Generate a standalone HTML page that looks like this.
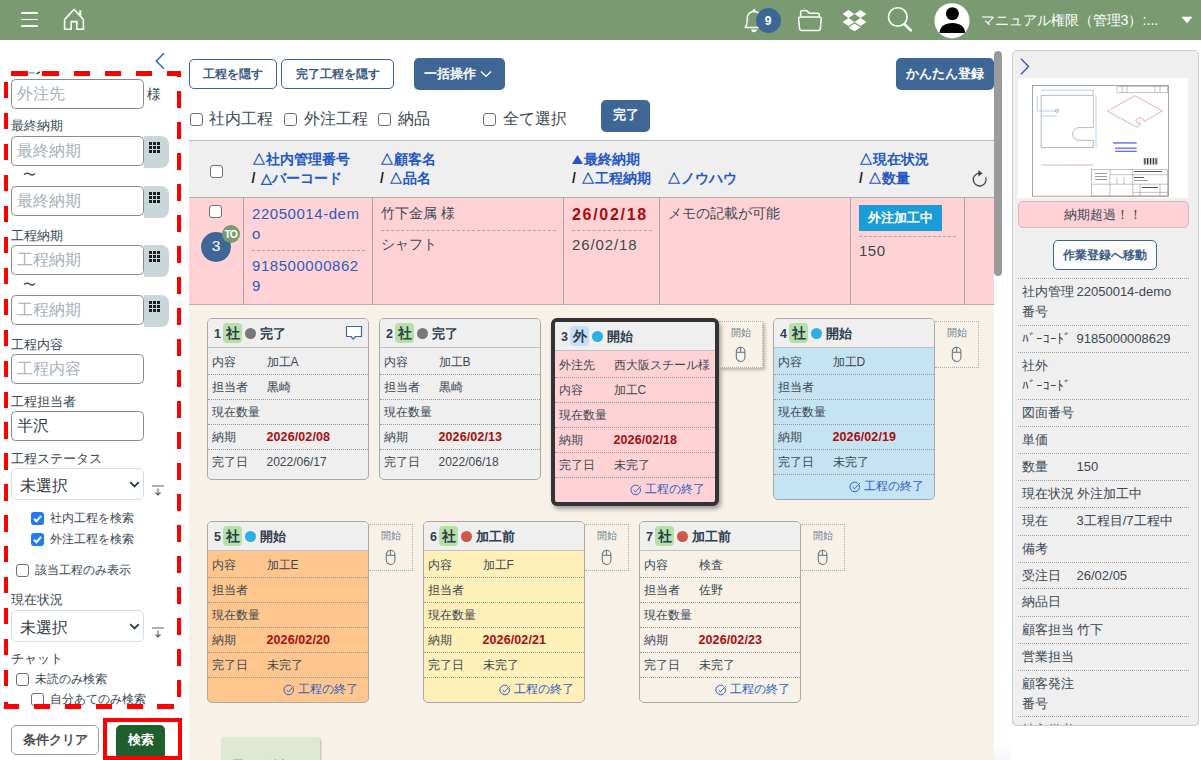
<!DOCTYPE html><html><head><meta charset="utf-8"><title>工程</title><style>
*{box-sizing:border-box;margin:0;padding:0}
html,body{width:1201px;height:760px;overflow:hidden;background:#fff;font-family:"Liberation Sans",sans-serif;color:#333}
.a{position:absolute}
.hdr{left:0;top:0;width:1201px;height:40px;background:#7a9b71}
.lbl{font-size:13px;color:#3b4853;line-height:15px;white-space:nowrap}
.inp{border:1px solid #8a8a8a;border-radius:4.5px;background:#fff;height:30px;width:133px;font-size:16px;color:#b3bcc4;padding-left:5px;line-height:28px;white-space:nowrap}
.cal{background:#c9d7db;border-radius:0 8px 8px 0;width:25px;height:32px}
.grid{left:5px;top:5px;width:11px;height:11px;background:
 linear-gradient(#222,#222) 0 0/3px 3px no-repeat}
.btnw{border:1px solid #3f6391;border-radius:5px;background:#fff;color:#3b5a82;font-weight:bold;font-size:12px;text-align:center;white-space:nowrap}
.btnb{border-radius:5px;background:#3f6796;color:#fff;font-weight:bold;font-size:12px;text-align:center;white-space:nowrap}
.cb{width:13px;height:13px;border:1px solid #6f6f6f;border-radius:3px;background:#fff}
.cbc{width:13px;height:13px;border-radius:3px;background:#1f7bf2}
.tl{font-size:16px;color:#3b4853;white-space:nowrap;line-height:18px}
.card{position:absolute;border:1px solid #a9a9a9;border-radius:5px;overflow:hidden;width:162px}
.card .hd{height:29px;background:#efefef;border-bottom:1px solid #c2c2c2;position:relative;white-space:nowrap}
.card .r{height:25px;border-bottom:1px dotted #9a9a9a;position:relative;font-size:12px;color:#3b4853;white-space:nowrap}
.card .r.f{height:27px}
.card .r.f span{top:6.5px}
.card .r span{position:absolute;top:5px;line-height:14px}
.card .r .k{left:4.3px}
.card .r .v{left:58.5px}
.card .r .red{color:#a50e0e;font-weight:bold;font-size:12.5px;letter-spacing:0.1px}
.card .lk{height:24px;position:relative;font-size:12.3px;color:#2f5fc0;white-space:nowrap}
.num{position:absolute;left:6px;top:7.5px;font-size:12.5px;font-weight:bold;color:#2d3e4e;line-height:14px}
.bg{position:absolute;left:15px;top:4px;width:19px;height:20px;border-radius:4px;background:#b6e0a6;font-size:14px;font-weight:bold;color:#2d3e4e;text-align:center;line-height:20px}
.dot{position:absolute;left:37px;top:8.5px;width:11px;height:11px;border-radius:50%}
.st{position:absolute;left:51.5px;top:6.5px;font-size:13px;font-weight:bold;color:#2d3e4e;line-height:16px}
.sbox{position:absolute;width:44px;height:47px;border:1px dotted #b0b0b0;border-left:none}
.sbox .t{position:absolute;left:0;width:43px;top:5px;text-align:center;font-size:10.2px;color:#6b7d8c;line-height:12px}
.dl{position:absolute;height:0;border-top:1px dashed #aaa}
.th{font-size:14px;font-weight:bold;color:#2457c5;white-space:nowrap;line-height:19px}
.th i{font-style:normal;color:#222}
.rp .row{position:absolute;left:1017px;width:171px;border-bottom:1px dotted #a0a0a0}
.rp .k,.rp .v{position:absolute;font-size:13px;color:#3b4853;line-height:20px;white-space:nowrap}
</style></head><body>
<div class="a hdr"></div>
<div class="a" style="left:20.5px;top:12.3px;width:17px;height:1.5px;background:#fff;border-radius:1px"></div>
<div class="a" style="left:20.5px;top:18.7px;width:17px;height:1.5px;background:#fff;border-radius:1px"></div>
<div class="a" style="left:20.5px;top:25.1px;width:17px;height:1.5px;background:#fff;border-radius:1px"></div>
<svg class="a" style="left:60px;top:6px" width="30" height="28" viewBox="0 0 30 28">
<path d="M4.6 13.5 L14 3.5 L23.4 13.5 L23.4 23.3 L16.8 23.3 L16.8 15.6 L11.2 15.6 L11.2 23.3 L4.6 23.3 Z" fill="none" stroke="#fff" stroke-width="1.6" stroke-linejoin="miter"/>
<rect x="19.3" y="4.2" width="2" height="5.6" fill="#fff"/></svg>
<svg class="a" style="left:742px;top:6px" width="24" height="28" viewBox="0 0 24 28">
<path d="M3 21.5 C5 19.5 5.2 17 5.2 13 C5.2 8.5 7.8 5.5 12 5.5 C16.2 5.5 18.8 8.5 18.8 13 C18.8 17 19 19.5 21 21.5 Z" fill="none" stroke="#fff" stroke-width="1.4" stroke-linejoin="round"/>
<circle cx="12" cy="4.4" r="1.4" fill="#fff"/>
<path d="M9.3 23.5 a2.7 2.7 0 0 0 5.4 0 Z" fill="#fff"/></svg>
<div class="a" style="left:755.5px;top:7.8px;width:25px;height:25px;border-radius:50%;background:#3f6796;color:#fff;font-weight:bold;font-size:12px;text-align:center;line-height:26.5px">9</div>
<svg class="a" style="left:796px;top:8px" width="28" height="26" viewBox="0 0 28 26">
<path d="M4.6 8.5 L4.6 4.6 Q4.6 2.6 6.6 2.6 L9.5 2.6 Q10.5 2.6 11.3 3.3 L13.2 5.2 L21.6 5.2 Q23.3 5.2 23.3 6.9 L23.3 8.5" fill="none" stroke="#fff" stroke-width="1.5" stroke-linejoin="round"/>
<path d="M2.6 11 Q2.6 9 4.6 9 L23.4 9 Q25.4 9 25.2 11 L24.4 20.5 Q24.2 22.5 22.2 22.5 L5.8 22.5 Q3.8 22.5 3.6 20.5 Z" fill="none" stroke="#fff" stroke-width="1.5" stroke-linejoin="round"/></svg>
<svg class="a" style="left:841.3px;top:9px" width="27" height="23" viewBox="0 0 27 23">
<path d="M7.5 1 L1.5 5 L7.5 9 L13.5 5 Z M19.5 1 L13.5 5 L19.5 9 L25.5 5 Z M1.5 13 L7.5 17 L13.5 13 L7.5 9 Z M25.5 13 L19.5 9 L13.5 13 L19.5 17 Z M7.5 18.5 L13.5 22.3 L19.5 18.5 L13.5 14.5 Z" fill="#fff"/></svg>
<svg class="a" style="left:885px;top:5px" width="30" height="30" viewBox="0 0 30 30">
<circle cx="12.8" cy="12" r="9.3" fill="none" stroke="#fff" stroke-width="1.6"/>
<path d="M19.6 19.4 L25.8 25.4" stroke="#fff" stroke-width="2.6" stroke-linecap="round"/></svg>
<svg class="a" style="left:934px;top:3px" width="36" height="36" viewBox="0 0 36 36">
<circle cx="18" cy="17.8" r="17.6" fill="#fff"/>
<circle cx="18.4" cy="10.7" r="6.5" fill="#000"/>
<path d="M5.6 30 C5.6 23.5 11 19.9 18.4 19.9 C25.8 19.9 31.1 23.5 31.1 30 Z" fill="#000"/></svg>
<div class="a" style="left:980.5px;top:11.5px;font-size:14.3px;color:#fff;white-space:nowrap;line-height:17px">マニュアル権限（管理3）:...</div>
<svg class="a" style="left:1181px;top:16px" width="12" height="8" viewBox="0 0 12 8"><path d="M0.5 0.8 L11.5 0.8 L6 7.2 Z" fill="#fff"/></svg>
<svg class="a" style="left:28px;top:70px" width="14" height="6" viewBox="0 0 14 6"><path d="M0.6 2.9 L7 2.9" stroke="#8a969f" stroke-width="1.3"/><path d="M8.6 3.8 L11.8 1.8" stroke="#2d3a45" stroke-width="1.5"/></svg>
<svg class="a" style="left:154px;top:52px" width="12" height="18" viewBox="0 0 12 18"><path d="M10 1.2 L2.2 9 L10 16.8" fill="none" stroke="#2f5fc0" stroke-width="1.4"/></svg>
<div class="a inp" style="left:11px;top:79px;color:#a5b0ba">外注先</div>
<div class="a" style="left:147px;top:86px;font-size:14px;color:#3b4853;line-height:16px">様</div>
<div class="a lbl" style="left:11px;top:118px">最終納期</div>
<div class="a inp" style="left:11px;top:136px;color:#a5b0ba">最終納期</div>
<div class="a cal" style="left:144px;top:136px"></div>
<svg class="a" style="left:148.5px;top:141.5px" width="12" height="12" viewBox="0 0 12 12"><g fill="#1e1e1e"><rect x="0" y="0" width="3" height="3"/><rect x="4" y="0" width="3" height="3"/><rect x="8" y="0" width="3" height="3"/><rect x="0" y="4" width="3" height="3"/><rect x="4" y="4" width="3" height="3"/><rect x="8" y="4" width="3" height="3"/><rect x="0" y="8" width="3" height="3"/><rect x="4" y="8" width="3" height="3"/><rect x="8" y="8" width="3" height="3"/></g></svg>
<div class="a lbl" style="left:23px;top:167px">〜</div>
<div class="a inp" style="left:11px;top:186px;color:#a5b0ba">最終納期</div>
<div class="a cal" style="left:144px;top:186px"></div>
<svg class="a" style="left:148.5px;top:191.5px" width="12" height="12" viewBox="0 0 12 12"><g fill="#1e1e1e"><rect x="0" y="0" width="3" height="3"/><rect x="4" y="0" width="3" height="3"/><rect x="8" y="0" width="3" height="3"/><rect x="0" y="4" width="3" height="3"/><rect x="4" y="4" width="3" height="3"/><rect x="8" y="4" width="3" height="3"/><rect x="0" y="8" width="3" height="3"/><rect x="4" y="8" width="3" height="3"/><rect x="8" y="8" width="3" height="3"/></g></svg>
<div class="a lbl" style="left:11px;top:228px">工程納期</div>
<div class="a inp" style="left:11px;top:245px;color:#a5b0ba">工程納期</div>
<div class="a cal" style="left:144px;top:245px"></div>
<svg class="a" style="left:148.5px;top:250.5px" width="12" height="12" viewBox="0 0 12 12"><g fill="#1e1e1e"><rect x="0" y="0" width="3" height="3"/><rect x="4" y="0" width="3" height="3"/><rect x="8" y="0" width="3" height="3"/><rect x="0" y="4" width="3" height="3"/><rect x="4" y="4" width="3" height="3"/><rect x="8" y="4" width="3" height="3"/><rect x="0" y="8" width="3" height="3"/><rect x="4" y="8" width="3" height="3"/><rect x="8" y="8" width="3" height="3"/></g></svg>
<div class="a lbl" style="left:23px;top:277px">〜</div>
<div class="a inp" style="left:11px;top:295px;color:#a5b0ba">工程納期</div>
<div class="a cal" style="left:144px;top:295px"></div>
<svg class="a" style="left:148.5px;top:300.5px" width="12" height="12" viewBox="0 0 12 12"><g fill="#1e1e1e"><rect x="0" y="0" width="3" height="3"/><rect x="4" y="0" width="3" height="3"/><rect x="8" y="0" width="3" height="3"/><rect x="0" y="4" width="3" height="3"/><rect x="4" y="4" width="3" height="3"/><rect x="8" y="4" width="3" height="3"/><rect x="0" y="8" width="3" height="3"/><rect x="4" y="8" width="3" height="3"/><rect x="8" y="8" width="3" height="3"/></g></svg>
<div class="a lbl" style="left:11px;top:337px">工程内容</div>
<div class="a inp" style="left:11px;top:354px;color:#a5b0ba">工程内容</div>
<div class="a lbl" style="left:11px;top:394px">工程担当者</div>
<div class="a inp" style="left:11px;top:411px;color:#2d3a45">半沢</div>
<div class="a lbl" style="left:11px;top:451px">工程ステータス</div>
<div class="a" style="left:11px;top:468px;width:133px;height:32px;border:1px solid #d3dde6;border-radius:5px;background:#fff"></div>
<div class="a" style="left:19.5px;top:477px;font-size:16px;color:#2d3a45;line-height:18px;white-space:nowrap">未選択</div>
<svg class="a" style="left:129px;top:481px" width="11" height="7" viewBox="0 0 11 7"><path d="M1.2 1.2 L5.5 5.4 L9.8 1.2" fill="none" stroke="#2d3a45" stroke-width="1.8"/></svg>
<svg class="a" style="left:151px;top:485px" width="14" height="12" viewBox="0 0 14 12"><path d="M1 1 L13 1" stroke="#7a8791" stroke-width="1.3"/><path d="M7 3.5 L7 10 M4.5 7.5 L7 10 L9.5 7.5" fill="none" stroke="#55626c" stroke-width="1.1"/></svg>
<div class="a cbc" style="left:31px;top:512px"><svg style="position:absolute;left:0;top:0" width="13" height="13" viewBox="0 0 13 13"><path d="M3 6.8 L5.4 9.2 L10.2 3.8" fill="none" stroke="#fff" stroke-width="2"/></svg></div>
<div class="a" style="left:50px;top:511px;font-size:12.3px;color:#3b4853;line-height:15px;white-space:nowrap">社内工程を検索</div>
<div class="a cbc" style="left:31px;top:533px"><svg style="position:absolute;left:0;top:0" width="13" height="13" viewBox="0 0 13 13"><path d="M3 6.8 L5.4 9.2 L10.2 3.8" fill="none" stroke="#fff" stroke-width="2"/></svg></div>
<div class="a" style="left:50px;top:532px;font-size:12.3px;color:#3b4853;line-height:15px;white-space:nowrap">外注工程を検索</div>
<div class="a cb" style="left:16px;top:564px"></div>
<div class="a" style="left:34.5px;top:563px;font-size:12.3px;color:#3b4853;line-height:15px;white-space:nowrap">該当工程のみ表示</div>
<div class="a lbl" style="left:11px;top:592px">現在状況</div>
<div class="a" style="left:11px;top:610px;width:133px;height:32px;border:1px solid #d3dde6;border-radius:5px;background:#fff"></div>
<div class="a" style="left:19.5px;top:619px;font-size:16px;color:#2d3a45;line-height:18px;white-space:nowrap">未選択</div>
<svg class="a" style="left:129px;top:623px" width="11" height="7" viewBox="0 0 11 7"><path d="M1.2 1.2 L5.5 5.4 L9.8 1.2" fill="none" stroke="#2d3a45" stroke-width="1.8"/></svg>
<svg class="a" style="left:151px;top:627px" width="14" height="12" viewBox="0 0 14 12"><path d="M1 1 L13 1" stroke="#7a8791" stroke-width="1.3"/><path d="M7 3.5 L7 10 M4.5 7.5 L7 10 L9.5 7.5" fill="none" stroke="#55626c" stroke-width="1.1"/></svg>
<div class="a lbl" style="left:11px;top:651px">チャット</div>
<div class="a cb" style="left:16px;top:673px"></div>
<div class="a" style="left:34.5px;top:672px;font-size:12.3px;color:#3b4853;line-height:15px;white-space:nowrap">未読のみ検索</div>
<div class="a cb" style="left:31px;top:693px"></div>
<div class="a" style="left:50px;top:692px;font-size:12.3px;color:#3b4853;line-height:15px;white-space:nowrap">自分あてのみ検索</div>
<div class="a" style="left:11px;top:725px;width:88px;height:30px;border:1px solid #9a9a9a;border-radius:5px;background:#fff;font-size:13px;font-weight:bold;color:#4d4d4d;text-align:center;line-height:28px">条件クリア</div>
<div class="a" style="left:116px;top:725px;width:49px;height:36px;border-radius:5px;background:#1e5f2d;font-size:13px;font-weight:bold;color:#fff;text-align:center;line-height:29px">検索</div>
<div class="a" style="left:103px;top:718px;width:78.5px;height:41.7px;border:4.8px solid #ff0000"></div>
<div class="a" style="left:11.4px;top:71.0px;width:16.8px;height:4.6px;background:#ff0000"></div>
<div class="a" style="left:42.4px;top:71.0px;width:16.8px;height:4.6px;background:#ff0000"></div>
<div class="a" style="left:73.6px;top:71.0px;width:16.8px;height:4.6px;background:#ff0000"></div>
<div class="a" style="left:104.6px;top:71.0px;width:16.8px;height:4.6px;background:#ff0000"></div>
<div class="a" style="left:135.6px;top:71.0px;width:16.8px;height:4.6px;background:#ff0000"></div>
<div class="a" style="left:166.6px;top:71.0px;width:14.9px;height:4.6px;background:#ff0000"></div>
<div class="a" style="left:176.7px;top:71.0px;width:4.8px;height:6.0px;background:#ff0000"></div>
<div class="a" style="left:176.7px;top:91.4px;width:4.8px;height:16.5px;background:#ff0000"></div>
<div class="a" style="left:176.7px;top:122.4px;width:4.8px;height:16.5px;background:#ff0000"></div>
<div class="a" style="left:176.7px;top:153.4px;width:4.8px;height:16.5px;background:#ff0000"></div>
<div class="a" style="left:176.7px;top:184.4px;width:4.8px;height:16.5px;background:#ff0000"></div>
<div class="a" style="left:176.7px;top:215.4px;width:4.8px;height:16.5px;background:#ff0000"></div>
<div class="a" style="left:176.7px;top:246.4px;width:4.8px;height:16.5px;background:#ff0000"></div>
<div class="a" style="left:176.7px;top:277.4px;width:4.8px;height:16.5px;background:#ff0000"></div>
<div class="a" style="left:176.7px;top:308.4px;width:4.8px;height:16.5px;background:#ff0000"></div>
<div class="a" style="left:176.7px;top:339.4px;width:4.8px;height:16.5px;background:#ff0000"></div>
<div class="a" style="left:176.7px;top:370.4px;width:4.8px;height:16.5px;background:#ff0000"></div>
<div class="a" style="left:176.7px;top:401.4px;width:4.8px;height:16.5px;background:#ff0000"></div>
<div class="a" style="left:176.7px;top:432.4px;width:4.8px;height:16.5px;background:#ff0000"></div>
<div class="a" style="left:176.7px;top:463.4px;width:4.8px;height:16.5px;background:#ff0000"></div>
<div class="a" style="left:176.7px;top:494.4px;width:4.8px;height:16.5px;background:#ff0000"></div>
<div class="a" style="left:176.7px;top:525.4px;width:4.8px;height:16.5px;background:#ff0000"></div>
<div class="a" style="left:176.7px;top:556.4px;width:4.8px;height:16.5px;background:#ff0000"></div>
<div class="a" style="left:176.7px;top:587.4px;width:4.8px;height:16.5px;background:#ff0000"></div>
<div class="a" style="left:176.7px;top:618.4px;width:4.8px;height:16.5px;background:#ff0000"></div>
<div class="a" style="left:176.7px;top:649.4px;width:4.8px;height:16.5px;background:#ff0000"></div>
<div class="a" style="left:176.7px;top:680.4px;width:4.8px;height:16.3px;background:#ff0000"></div>
<div class="a" style="left:3.5px;top:82.0px;width:4.7px;height:16.3px;background:#ff0000"></div>
<div class="a" style="left:3.5px;top:113.0px;width:4.7px;height:16.3px;background:#ff0000"></div>
<div class="a" style="left:3.5px;top:143.9px;width:4.7px;height:16.3px;background:#ff0000"></div>
<div class="a" style="left:3.5px;top:174.8px;width:4.7px;height:16.3px;background:#ff0000"></div>
<div class="a" style="left:3.5px;top:205.8px;width:4.7px;height:16.3px;background:#ff0000"></div>
<div class="a" style="left:3.5px;top:236.8px;width:4.7px;height:16.3px;background:#ff0000"></div>
<div class="a" style="left:3.5px;top:267.7px;width:4.7px;height:16.3px;background:#ff0000"></div>
<div class="a" style="left:3.5px;top:298.6px;width:4.7px;height:16.3px;background:#ff0000"></div>
<div class="a" style="left:3.5px;top:329.6px;width:4.7px;height:16.3px;background:#ff0000"></div>
<div class="a" style="left:3.5px;top:360.6px;width:4.7px;height:16.3px;background:#ff0000"></div>
<div class="a" style="left:3.5px;top:391.5px;width:4.7px;height:16.3px;background:#ff0000"></div>
<div class="a" style="left:3.5px;top:422.4px;width:4.7px;height:16.3px;background:#ff0000"></div>
<div class="a" style="left:3.5px;top:453.4px;width:4.7px;height:16.3px;background:#ff0000"></div>
<div class="a" style="left:3.5px;top:484.3px;width:4.7px;height:16.3px;background:#ff0000"></div>
<div class="a" style="left:3.5px;top:515.3px;width:4.7px;height:16.3px;background:#ff0000"></div>
<div class="a" style="left:3.5px;top:546.2px;width:4.7px;height:16.3px;background:#ff0000"></div>
<div class="a" style="left:3.5px;top:577.2px;width:4.7px;height:16.3px;background:#ff0000"></div>
<div class="a" style="left:3.5px;top:608.1px;width:4.7px;height:16.3px;background:#ff0000"></div>
<div class="a" style="left:3.5px;top:639.1px;width:4.7px;height:16.3px;background:#ff0000"></div>
<div class="a" style="left:3.5px;top:670.0px;width:4.7px;height:16.3px;background:#ff0000"></div>
<div class="a" style="left:3.5px;top:702.0px;width:4.7px;height:7.0px;background:#ff0000"></div>
<div class="a" style="left:3.5px;top:704.3px;width:15.8px;height:4.7px;background:#ff0000"></div>
<div class="a" style="left:33.5px;top:704.3px;width:16.8px;height:4.7px;background:#ff0000"></div>
<div class="a" style="left:64.5px;top:704.3px;width:16.5px;height:4.7px;background:#ff0000"></div>
<div class="a" style="left:95.7px;top:704.3px;width:16.6px;height:4.7px;background:#ff0000"></div>
<div class="a" style="left:126.6px;top:704.3px;width:16.6px;height:4.7px;background:#ff0000"></div>
<div class="a" style="left:157.4px;top:704.3px;width:16.6px;height:4.7px;background:#ff0000"></div>
<div class="a btnw" style="left:189px;top:59px;width:88px;height:30px;line-height:28px">工程を隠す</div>
<div class="a btnw" style="left:281px;top:59px;width:113px;height:30px;line-height:28px">完了工程を隠す</div>
<div class="a btnb" style="left:414px;top:58px;width:91px;height:32px;line-height:32px;padding-right:20px;font-size:12.5px">一括操作</div>
<svg class="a" style="left:480px;top:70px" width="12" height="8" viewBox="0 0 12 8"><path d="M1 1.5 L6 6.3 L11 1.5" fill="none" stroke="#fff" stroke-width="1.2"/></svg>
<div class="a btnb" style="left:896px;top:58px;width:98px;height:32px;line-height:32px;font-size:12.5px">かんたん登録</div>
<div class="a" style="left:994px;top:51px;width:8px;height:225px;border-radius:4px;background:#9b9b9b"></div>
<div class="a cb" style="left:189.5px;top:113px"></div>
<div class="a tl" style="left:209px;top:110px">社内工程</div>
<div class="a cb" style="left:283.5px;top:113px"></div>
<div class="a tl" style="left:303.5px;top:110px">外注工程</div>
<div class="a cb" style="left:377.5px;top:113px"></div>
<div class="a tl" style="left:397.5px;top:110px">納品</div>
<div class="a cb" style="left:483px;top:113px"></div>
<div class="a tl" style="left:503px;top:110px">全て選択</div>
<div class="a btnb" style="left:601px;top:100px;width:49px;height:32px;line-height:30px;font-size:12.5px">完了</div>
<div class="a" style="left:189px;top:140px;width:805px;height:58px;background:#efefef;border-top:1px solid #b5b5b5;border-bottom:1px solid #b0b0b0"></div>
<div class="a" style="left:189px;top:198px;width:805px;height:107px;background:#ffd3d6;border-bottom:1px solid #b0b0b0"></div>
<div class="a" style="left:189px;top:305px;width:805px;height:455px;background:#f8f1e7"></div>
<div class="a" style="left:243px;top:198px;width:1px;height:107px;background:#a8a8a8"></div>
<div class="a" style="left:372px;top:198px;width:1px;height:107px;background:#a8a8a8"></div>
<div class="a" style="left:563px;top:198px;width:1px;height:107px;background:#a8a8a8"></div>
<div class="a" style="left:659px;top:198px;width:1px;height:107px;background:#a8a8a8"></div>
<div class="a" style="left:850px;top:198px;width:1px;height:107px;background:#a8a8a8"></div>
<div class="a" style="left:964px;top:198px;width:1px;height:107px;background:#a8a8a8"></div>
<div class="a cb" style="left:210px;top:164.5px"></div>
<div class="a th" style="left:251.5px;top:150px">△社内管理番号<br><i style="margin-right:1.5px">/ </i>△バーコード</div>
<div class="a th" style="left:380px;top:150px">△顧客名<br><i style="margin-right:1.5px">/ </i>△品名</div>
<div class="a th" style="left:572px;top:150px"><svg style="display:inline-block;vertical-align:0px;margin-right:1px" width="11" height="9" viewBox="0 0 11 9"><path d="M5.5 0 L11 9 L0 9 Z" fill="#2457c5"/></svg>最終納期<br><i style="margin-right:1.5px">/ </i>△工程納期</div>
<div class="a th" style="left:667px;top:169px">△ノウハウ</div>
<div class="a th" style="left:859px;top:150px">△現在状況<br><i style="margin-right:1.5px">/ </i>△数量</div>
<svg class="a" style="left:969.5px;top:168.8px" width="20" height="20" viewBox="0 0 20 20"><path d="M9.6 4.2 A6.4 6.4 0 1 0 15.8 8.6" fill="none" stroke="#33434f" stroke-width="1.3"/><path d="M8.2 1.2 L12.6 4.3 L8.4 7.4 Z" fill="#33434f"/></svg>
<div class="a cb" style="left:209px;top:205px"></div>
<div class="a" style="left:201px;top:232px;width:30px;height:30px;border-radius:50%;background:#3f6796;color:#fff;font-size:15.5px;text-align:center;line-height:28.5px">3</div>
<div class="a" style="left:222px;top:225px;width:18px;height:18px;border-radius:50%;background:#7a9b71;color:#fff;font-size:10.5px;font-weight:bold;text-align:center;line-height:18px;letter-spacing:-0.9px;text-indent:-0.5px">TO</div>
<div class="a" style="left:252px;top:204px;font-size:15px;color:#2b5cc0;line-height:19.5px;letter-spacing:0.55px">22050014-dem<br>o</div>
<div class="dl" style="left:252px;top:250px;width:113px"></div>
<div class="a" style="left:252px;top:256px;font-size:15px;color:#2b5cc0;line-height:19.5px;letter-spacing:0.55px">918500000862<br>9</div>
<div class="a" style="left:381px;top:205px;font-size:14px;color:#3b4853;line-height:17px;white-space:nowrap">竹下金属 様</div>
<div class="dl" style="left:381px;top:230px;width:175px"></div>
<div class="a" style="left:381px;top:236px;font-size:14px;color:#3b4853;line-height:17px;white-space:nowrap">シャフト</div>
<div class="a" style="left:572px;top:205.5px;font-size:16px;font-weight:bold;color:#a50e0e;line-height:18px;letter-spacing:1.7px">26/02/18</div>
<div class="dl" style="left:572px;top:230px;width:80px"></div>
<div class="a" style="left:572px;top:236px;font-size:15px;color:#3b4853;line-height:17px;letter-spacing:0.9px">26/02/18</div>
<div class="a" style="left:668px;top:205px;font-size:14px;color:#3b4853;line-height:17px;white-space:nowrap">メモの記載が可能</div>
<div class="a" style="left:859px;top:205px;width:83px;height:26px;background:#1a9cd8;color:#fff;font-weight:bold;font-size:13px;text-align:center;line-height:26px">外注加工中</div>
<div class="dl" style="left:859px;top:236px;width:97px"></div>
<div class="a" style="left:859px;top:242px;font-size:15px;color:#3b4853;line-height:17px;letter-spacing:0.5px">150</div>
<div class="card" style="left:207px;top:318px;width:162px;border:1px solid #a9a9a9;border-radius:5px;background:#efefef;"><div class="hd"><span class="num">1</span><span class="bg" style="background:#b6e0a6">社</span><span class="dot" style="background:#777777"></span><span class="st">完了</span><svg style="position:absolute;left:137px;top:6px" width="18" height="16" viewBox="0 0 18 16"><path d="M1.5 1.5 L16.5 1.5 L16.5 11.5 L10.5 11.5 L8.2 14.2 L6 11.5 L1.5 11.5 Z" fill="#fff" stroke="#3f6796" stroke-width="1.2" stroke-linejoin="round"/></svg></div><div class="r f"><span class="k">内容</span><span class="v">加工A</span></div><div class="r"><span class="k">担当者</span><span class="v">黒崎</span></div><div class="r"><span class="k">現在数量</span><span class="v"></span></div><div class="r"><span class="k">納期</span><span class="v red">2026/02/08</span></div><div class="r" style="height:29px;border-bottom:none"><span class="k">完了日</span><span class="v">2022/06/17</span></div></div>
<div class="card" style="left:379px;top:318px;width:162px;border:1px solid #a9a9a9;border-radius:5px;background:#efefef;"><div class="hd"><span class="num">2</span><span class="bg" style="background:#b6e0a6">社</span><span class="dot" style="background:#777777"></span><span class="st">完了</span></div><div class="r f"><span class="k">内容</span><span class="v">加工B</span></div><div class="r"><span class="k">担当者</span><span class="v">黒崎</span></div><div class="r"><span class="k">現在数量</span><span class="v"></span></div><div class="r"><span class="k">納期</span><span class="v red">2026/02/13</span></div><div class="r" style="height:29px;border-bottom:none"><span class="k">完了日</span><span class="v">2022/06/18</span></div></div>
<div class="card" style="left:551px;top:318px;width:168px;border:4px solid #333;border-radius:6px;background:#ffd3d6;box-shadow:2px 3px 4px rgba(0,0,0,0.35);"><div class="hd"><span class="num">3</span><span class="bg" style="background:#c8dff7">外</span><span class="dot" style="background:#2cb0e0"></span><span class="st">開始</span></div><div class="r f"><span class="k">外注先</span><span class="v">西大阪スチール様</span></div><div class="r"><span class="k">内容</span><span class="v">加工C</span></div><div class="r"><span class="k">現在数量</span><span class="v"></span></div><div class="r"><span class="k">納期</span><span class="v red">2026/02/18</span></div><div class="r"><span class="k">完了日</span><span class="v">未完了</span></div><div class="lk"><span style="position:absolute;right:10px;top:4px;line-height:15px"><svg style="position:absolute;left:-15px;top:2px" width="12" height="12" viewBox="0 0 12 12"><path d="M10.2 4.2 A4.8 4.8 0 1 1 8.6 2.1" fill="none" stroke="#2f5fc0" stroke-width="1"/><path d="M3.6 6 L5.5 7.9 L10.8 2.2" fill="none" stroke="#2f5fc0" stroke-width="1"/></svg>工程の終了</span></div></div>
<div class="sbox" style="left:719px;top:321px;box-shadow:2px 2px 3px rgba(0,0,0,0.25);"><div class="t">開始</div><svg style="position:absolute;left:16px;top:23.5px" width="12" height="17" viewBox="0 0 12 17"><rect x="1.3" y="1.3" width="8.6" height="14.2" rx="4.3" fill="none" stroke="#5f7385" stroke-width="1.05"/><path d="M5.6 1.3 L5.6 6.3 M1.3 6.3 L9.9 6.3" stroke="#5f7385" stroke-width="1"/></svg></div>
<div class="card" style="left:773px;top:318px;width:162px;border:1px solid #a9a9a9;border-radius:5px;background:#c6e3f4;"><div class="hd"><span class="num">4</span><span class="bg" style="background:#b6e0a6">社</span><span class="dot" style="background:#2cb0e0"></span><span class="st">開始</span></div><div class="r f"><span class="k">内容</span><span class="v">加工D</span></div><div class="r"><span class="k">担当者</span><span class="v"></span></div><div class="r"><span class="k">現在数量</span><span class="v"></span></div><div class="r"><span class="k">納期</span><span class="v red">2026/02/19</span></div><div class="r"><span class="k">完了日</span><span class="v">未完了</span></div><div class="lk"><span style="position:absolute;right:10px;top:4px;line-height:15px"><svg style="position:absolute;left:-15px;top:2px" width="12" height="12" viewBox="0 0 12 12"><path d="M10.2 4.2 A4.8 4.8 0 1 1 8.6 2.1" fill="none" stroke="#2f5fc0" stroke-width="1"/><path d="M3.6 6 L5.5 7.9 L10.8 2.2" fill="none" stroke="#2f5fc0" stroke-width="1"/></svg>工程の終了</span></div></div>
<div class="sbox" style="left:935px;top:321px;"><div class="t">開始</div><svg style="position:absolute;left:16px;top:23.5px" width="12" height="17" viewBox="0 0 12 17"><rect x="1.3" y="1.3" width="8.6" height="14.2" rx="4.3" fill="none" stroke="#5f7385" stroke-width="1.05"/><path d="M5.6 1.3 L5.6 6.3 M1.3 6.3 L9.9 6.3" stroke="#5f7385" stroke-width="1"/></svg></div>
<div class="card" style="left:207px;top:521px;width:162px;border:1px solid #a9a9a9;border-radius:5px;background:#ffc78e;"><div class="hd"><span class="num">5</span><span class="bg" style="background:#b6e0a6">社</span><span class="dot" style="background:#2cb0e0"></span><span class="st">開始</span></div><div class="r f"><span class="k">内容</span><span class="v">加工E</span></div><div class="r"><span class="k">担当者</span><span class="v"></span></div><div class="r"><span class="k">現在数量</span><span class="v"></span></div><div class="r"><span class="k">納期</span><span class="v red">2026/02/20</span></div><div class="r"><span class="k">完了日</span><span class="v">未完了</span></div><div class="lk"><span style="position:absolute;right:10px;top:4px;line-height:15px"><svg style="position:absolute;left:-15px;top:2px" width="12" height="12" viewBox="0 0 12 12"><path d="M10.2 4.2 A4.8 4.8 0 1 1 8.6 2.1" fill="none" stroke="#2f5fc0" stroke-width="1"/><path d="M3.6 6 L5.5 7.9 L10.8 2.2" fill="none" stroke="#2f5fc0" stroke-width="1"/></svg>工程の終了</span></div></div>
<div class="sbox" style="left:369px;top:524px;"><div class="t">開始</div><svg style="position:absolute;left:16px;top:23.5px" width="12" height="17" viewBox="0 0 12 17"><rect x="1.3" y="1.3" width="8.6" height="14.2" rx="4.3" fill="none" stroke="#5f7385" stroke-width="1.05"/><path d="M5.6 1.3 L5.6 6.3 M1.3 6.3 L9.9 6.3" stroke="#5f7385" stroke-width="1"/></svg></div>
<div class="card" style="left:423px;top:521px;width:162px;border:1px solid #a9a9a9;border-radius:5px;background:#fff0b9;"><div class="hd"><span class="num">6</span><span class="bg" style="background:#b6e0a6">社</span><span class="dot" style="background:#d0574c"></span><span class="st">加工前</span></div><div class="r f"><span class="k">内容</span><span class="v">加工F</span></div><div class="r"><span class="k">担当者</span><span class="v"></span></div><div class="r"><span class="k">現在数量</span><span class="v"></span></div><div class="r"><span class="k">納期</span><span class="v red">2026/02/21</span></div><div class="r"><span class="k">完了日</span><span class="v">未完了</span></div><div class="lk"><span style="position:absolute;right:10px;top:4px;line-height:15px"><svg style="position:absolute;left:-15px;top:2px" width="12" height="12" viewBox="0 0 12 12"><path d="M10.2 4.2 A4.8 4.8 0 1 1 8.6 2.1" fill="none" stroke="#2f5fc0" stroke-width="1"/><path d="M3.6 6 L5.5 7.9 L10.8 2.2" fill="none" stroke="#2f5fc0" stroke-width="1"/></svg>工程の終了</span></div></div>
<div class="sbox" style="left:585px;top:524px;"><div class="t">開始</div><svg style="position:absolute;left:16px;top:23.5px" width="12" height="17" viewBox="0 0 12 17"><rect x="1.3" y="1.3" width="8.6" height="14.2" rx="4.3" fill="none" stroke="#5f7385" stroke-width="1.05"/><path d="M5.6 1.3 L5.6 6.3 M1.3 6.3 L9.9 6.3" stroke="#5f7385" stroke-width="1"/></svg></div>
<div class="card" style="left:639px;top:521px;width:162px;border:1px solid #a9a9a9;border-radius:5px;background:#f8f1e7;"><div class="hd"><span class="num">7</span><span class="bg" style="background:#b6e0a6">社</span><span class="dot" style="background:#d0574c"></span><span class="st">加工前</span></div><div class="r f"><span class="k">内容</span><span class="v">検査</span></div><div class="r"><span class="k">担当者</span><span class="v">佐野</span></div><div class="r"><span class="k">現在数量</span><span class="v"></span></div><div class="r"><span class="k">納期</span><span class="v red">2026/02/23</span></div><div class="r"><span class="k">完了日</span><span class="v">未完了</span></div><div class="lk"><span style="position:absolute;right:10px;top:4px;line-height:15px"><svg style="position:absolute;left:-15px;top:2px" width="12" height="12" viewBox="0 0 12 12"><path d="M10.2 4.2 A4.8 4.8 0 1 1 8.6 2.1" fill="none" stroke="#2f5fc0" stroke-width="1"/><path d="M3.6 6 L5.5 7.9 L10.8 2.2" fill="none" stroke="#2f5fc0" stroke-width="1"/></svg>工程の終了</span></div></div>
<div class="sbox" style="left:801px;top:524px;"><div class="t">開始</div><svg style="position:absolute;left:16px;top:23.5px" width="12" height="17" viewBox="0 0 12 17"><rect x="1.3" y="1.3" width="8.6" height="14.2" rx="4.3" fill="none" stroke="#5f7385" stroke-width="1.05"/><path d="M5.6 1.3 L5.6 6.3 M1.3 6.3 L9.9 6.3" stroke="#5f7385" stroke-width="1"/></svg></div>
<div class="a" style="left:221px;top:737px;width:99px;height:30px;background:#dfe8d3;border-radius:4px;box-shadow:1px 1px 2px rgba(0,0,0,0.25);overflow:hidden"><div style="position:absolute;left:11px;top:20px;font-size:12px;color:#4a5a68;white-space:nowrap">工程を追加する</div></div>
<div class="a" style="left:994px;top:744px;width:207px;height:16px;background:linear-gradient(rgba(0,0,0,0),rgba(0,0,0,0.035))"></div>
<div class="a rp" style="left:1011.5px;top:49.5px;width:187.5px;height:676px;background:#efefef;border:1px solid #cdcdcd;border-radius:5px;overflow:hidden"></div>
<svg class="a" style="left:1018px;top:57px" width="14" height="19" viewBox="0 0 14 19"><path d="M3 1.8 L10.5 9.5 L3 17.2" fill="none" stroke="#2f5fc0" stroke-width="1.4"/></svg>
<div class="a" style="left:1018px;top:77.5px;width:170px;height:120.5px;background:#fff"></div>
<svg class="a" style="left:1032px;top:85px" width="137" height="112" viewBox="0 0 137 112">
<rect x="0.4" y="0.4" width="136.2" height="110.8" fill="#fff" stroke="#8c8c8c" stroke-width="0.8"/>
<g fill="none" stroke-width="0.6">
<path d="M61.3 42.6 L47 42.6 A6.35 6.35 0 0 0 47 55.3 L61.3 55.3 L61.3 62.5 L9.2 62.5 L9.2 10.3 L61.3 10.3" stroke="#8a8a8a"/>
<path d="M61.3 10.3 L61.3 42.6" stroke="#d87a7a"/>
<path d="M9.2 5.2 L61.3 5.2 M64 10.3 L64 62.5 M5.2 10.3 L5.2 26 M9.2 31 L25 31 M5.2 26 L25 26 M61.3 5 L61.3 10" stroke="#7fb0e6"/>
<circle cx="25" cy="25.7" r="1.6" stroke="#888"/>
<path d="M75.5 26 L103.1 10.7 L130.3 26 L112 36.5 A4 4 0 0 0 104 37 L109 39.2 L104.7 42.3 Z" stroke="#c98080"/>
<path d="M9.2 80 L35 80" stroke="#bdbdbd" stroke-width="0.9"/><path d="M35 80 L61.3 80" stroke="#e6a8a8" stroke-width="0.9"/>
<g stroke="#777" stroke-width="0.45">
<rect x="59.7" y="84.2" width="75.8" height="26.8"/>
<path d="M77.9 84.2 L77.9 111 M100.8 84.2 L100.8 111 M59.7 99.2 L135.5 99.2 M100.8 107.4 L135.5 107.4 M77.9 89.7 L100.8 89.7 M100.8 89.7 L135.5 89.7 M85 92 L85 99 M92 92 L92 99 M108 99.2 L108 111 M128 99.2 L128 111"/>
<path d="M85 1.5 L135.5 1.5 L135.5 7.6 L85 7.6 Z M90 1.5 L90 7.6 M95 1.5 L95 7.6 M123 1.5 L123 7.6 M128 1.5 L128 7.6"/>
</g>
</g>
<g fill="#5b5bf0"><rect x="81" y="57.3" width="23.7" height="1.3"/><rect x="83" y="62.6" width="21.7" height="1.2"/><rect x="83" y="65.7" width="21.7" height="1.2"/></g>
<g fill="#333"><rect x="111.8" y="73.1" width="1" height="6.4"/><rect x="113.4" y="73.1" width="0.6" height="6.4"/><rect x="114.8" y="73.1" width="1.2" height="6.4"/><rect x="116.6" y="73.1" width="0.6" height="6.4"/><rect x="118" y="73.1" width="1" height="6.4"/><rect x="119.7" y="73.1" width="0.6" height="6.4"/><rect x="121" y="73.1" width="1.2" height="6.4"/><rect x="123" y="73.1" width="0.6" height="6.4"/><rect x="124.3" y="73.1" width="1" height="6.4"/></g>
<g fill="#555"><rect x="102" y="86" width="28" height="1"/><rect x="102" y="92" width="10" height="1"/><rect x="102" y="95" width="14" height="0.6"/><rect x="110" y="102" width="16" height="1"/><rect x="63" y="88" width="12" height="0.6"/><rect x="63" y="91" width="12" height="0.6"/><rect x="63" y="94" width="12" height="0.6"/></g>
</svg>
<div class="a" style="left:1017.5px;top:200.5px;width:171.5px;height:27px;background:#ffd3d6;border:1px solid #dcb3b6;border-radius:5px;font-size:13px;color:#3b4853;text-align:center;line-height:25px">納期超過！！</div>
<div class="a btnw" style="left:1053px;top:239.5px;width:104px;height:30px;line-height:28px;background:#fcfcfc;font-size:11.5px">作業登録へ移動</div>
<div class="a" style="left:1017.5px;top:277.5px;width:171px;height:1px;border-top:1px dotted #a3a3a3"></div>
<div class="a" style="left:1022px;top:281.5px;font-size:13px;color:#3b4853;line-height:20px;white-space:nowrap">社内管理<br>番号</div>
<div class="a" style="left:1076.5px;top:281.5px;font-size:13px;color:#3b4853;line-height:20px;white-space:nowrap">22050014-demo</div>
<div class="a" style="left:1017.5px;top:325px;width:171px;height:1px;border-top:1px dotted #a3a3a3"></div>
<div class="a" style="left:1022px;top:329px;font-size:13px;color:#3b4853;line-height:20px;white-space:nowrap">ﾊﾞｰｺｰﾄﾞ</div>
<div class="a" style="left:1076.5px;top:329px;font-size:13px;color:#3b4853;line-height:20px;white-space:nowrap">9185000008629</div>
<div class="a" style="left:1017.5px;top:351.5px;width:171px;height:1px;border-top:1px dotted #a3a3a3"></div>
<div class="a" style="left:1022px;top:355.5px;font-size:13px;color:#3b4853;line-height:20px;white-space:nowrap">社外<br>ﾊﾞｰｺｰﾄﾞ</div>
<div class="a" style="left:1017.5px;top:399px;width:171px;height:1px;border-top:1px dotted #a3a3a3"></div>
<div class="a" style="left:1022px;top:403px;font-size:13px;color:#3b4853;line-height:20px;white-space:nowrap">図面番号</div>
<div class="a" style="left:1017.5px;top:426.3px;width:171px;height:1px;border-top:1px dotted #a3a3a3"></div>
<div class="a" style="left:1022px;top:430.3px;font-size:13px;color:#3b4853;line-height:20px;white-space:nowrap">単価</div>
<div class="a" style="left:1017.5px;top:453px;width:171px;height:1px;border-top:1px dotted #a3a3a3"></div>
<div class="a" style="left:1022px;top:457px;font-size:13px;color:#3b4853;line-height:20px;white-space:nowrap">数量</div>
<div class="a" style="left:1076.5px;top:457px;font-size:13px;color:#3b4853;line-height:20px;white-space:nowrap">150</div>
<div class="a" style="left:1017.5px;top:480px;width:171px;height:1px;border-top:1px dotted #a3a3a3"></div>
<div class="a" style="left:1022px;top:484px;font-size:13px;color:#3b4853;line-height:20px;white-space:nowrap">現在状況</div>
<div class="a" style="left:1076.5px;top:484px;font-size:13px;color:#3b4853;line-height:20px;white-space:nowrap">外注加工中</div>
<div class="a" style="left:1017.5px;top:507.3px;width:171px;height:1px;border-top:1px dotted #a3a3a3"></div>
<div class="a" style="left:1022px;top:511.3px;font-size:13px;color:#3b4853;line-height:20px;white-space:nowrap">現在</div>
<div class="a" style="left:1076.5px;top:511.3px;font-size:13px;color:#3b4853;line-height:20px;white-space:nowrap">3工程目/7工程中</div>
<div class="a" style="left:1017.5px;top:534.6px;width:171px;height:1px;border-top:1px dotted #a3a3a3"></div>
<div class="a" style="left:1022px;top:538.6px;font-size:13px;color:#3b4853;line-height:20px;white-space:nowrap">備考</div>
<div class="a" style="left:1017.5px;top:561.6px;width:171px;height:1px;border-top:1px dotted #a3a3a3"></div>
<div class="a" style="left:1022px;top:565.6px;font-size:13px;color:#3b4853;line-height:20px;white-space:nowrap">受注日</div>
<div class="a" style="left:1076.5px;top:565.6px;font-size:13px;color:#3b4853;line-height:20px;white-space:nowrap">26/02/05</div>
<div class="a" style="left:1017.5px;top:588.3px;width:171px;height:1px;border-top:1px dotted #a3a3a3"></div>
<div class="a" style="left:1022px;top:592.3px;font-size:13px;color:#3b4853;line-height:20px;white-space:nowrap">納品日</div>
<div class="a" style="left:1017.5px;top:615.6px;width:171px;height:1px;border-top:1px dotted #a3a3a3"></div>
<div class="a" style="left:1022px;top:619.6px;font-size:13px;color:#3b4853;line-height:20px;white-space:nowrap">顧客担当</div>
<div class="a" style="left:1076.5px;top:619.6px;font-size:13px;color:#3b4853;line-height:20px;white-space:nowrap">竹下</div>
<div class="a" style="left:1017.5px;top:643px;width:171px;height:1px;border-top:1px dotted #a3a3a3"></div>
<div class="a" style="left:1022px;top:647px;font-size:13px;color:#3b4853;line-height:20px;white-space:nowrap">営業担当</div>
<div class="a" style="left:1017.5px;top:669.6px;width:171px;height:1px;border-top:1px dotted #a3a3a3"></div>
<div class="a" style="left:1022px;top:673.6px;font-size:13px;color:#3b4853;line-height:20px;white-space:nowrap">顧客発注<br>番号</div>
<div class="a" style="left:1017.5px;top:716px;width:171px;height:1px;border-top:1px dotted #a3a3a3"></div>
<div class="a" style="left:1022px;top:720px;font-size:13px;color:#3b4853;line-height:20px;white-space:nowrap">納入備考</div>
<div class="a" style="left:1011px;top:725.5px;width:190px;height:40px;background:#fff"></div>
<div class="a" style="left:1011.5px;top:700px;width:187.5px;height:26px;border:1px solid #cdcdcd;border-top:none;border-radius:0 0 5px 5px"></div>
</body></html>
